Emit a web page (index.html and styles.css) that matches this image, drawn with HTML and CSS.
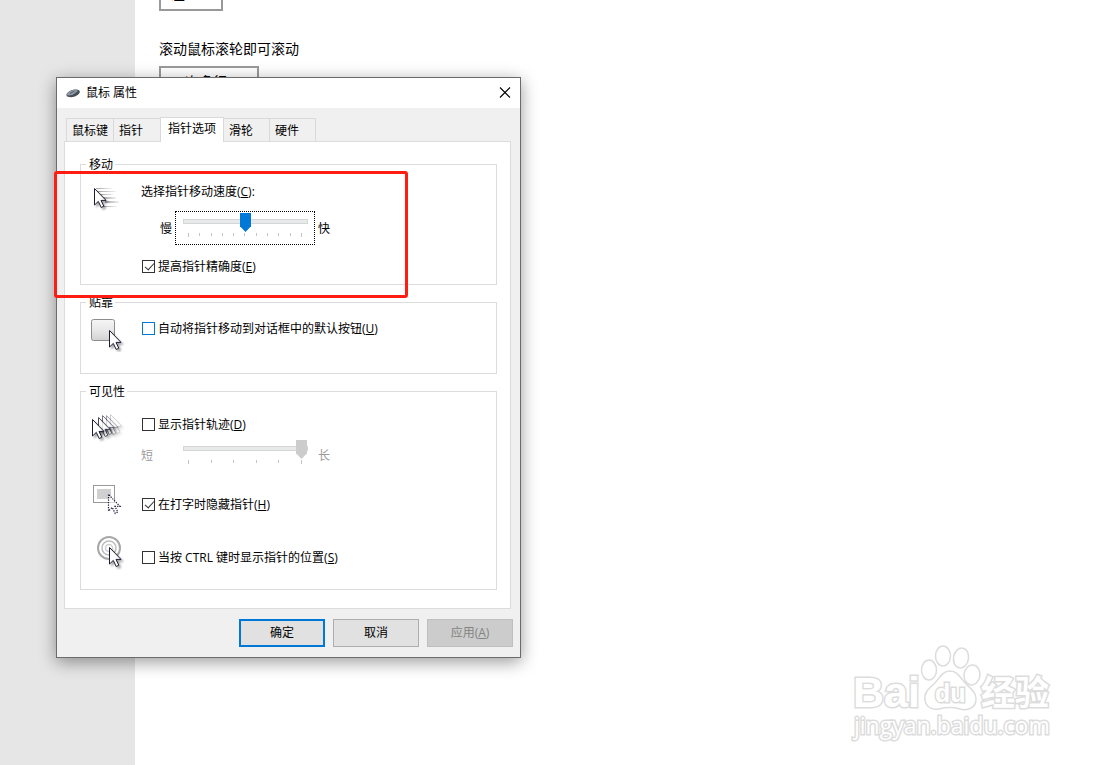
FILE: index.html
```
<!DOCTYPE html>
<html lang="zh-CN">
<head>
    <meta charset="UTF-8">
    <meta name="viewport" content="width=device-width, initial-scale=1.0">
    <title>鼠标 属性</title>
    <link rel="stylesheet" href="styles.css">
</head>
<body>
    <!-- shared cursor shapes -->
    <svg class="defs" width="0" height="0" aria-hidden="true">
        <defs>
            <path id="arrow" d="M0.5 0.5V17L4.3 13.4L7.2 19.5L9.8 18.2L7 12.4H12Z"/>
            <linearGradient id="fade" x1="0" x2="1">
                <stop offset="0" stop-color="#a4a4a4"/>
                <stop offset="1" stop-color="#f2f2f2"/>
            </linearGradient>
            <linearGradient id="key" x1="0" y1="0" x2="0" y2="1">
                <stop offset="0" stop-color="#f6f6f6"/>
                <stop offset="0.5" stop-color="#e8e8e8"/>
                <stop offset="1" stop-color="#d2d2d2"/>
            </linearGradient>
            <filter id="soft" x="-30%" y="-30%" width="170%" height="170%">
                <feDropShadow dx="2" dy="2" stdDeviation="1" flood-opacity="0.35"/>
            </filter>
        </defs>
    </svg>

    <div class="page">
        <aside class="sidebar"></aside>
        <main class="settings">
            <select class="picker picker-small" aria-label="主按钮">
                <option>左</option>
            </select>
            <label class="settings-label" for="scroll">滚动鼠标滚轮即可滚动</label>
            <select class="picker" id="scroll">
                <option>一次多行</option>
            </select>
        </main>
    </div>

    <div class="dialog" role="dialog" aria-labelledby="dialog-title">
        <header class="titlebar">
            <svg class="mouse" width="14" height="10" viewBox="0 0 14 10">
                <path d="M0.500 7.500C0 5 4 2 9 1.500C12 1.200 14 2 13.800 4C13.500 6.500 9 9.200 5 9.200C2.500 9.200 0.800 8.800 0.500 7.500Z" fill="#454c55"/>
                <path d="M0.800 6.500C2 3.500 6 1.800 10 1.800L12 3L6.500 7L2 7.500Z" fill="#8e99a6"/>
                <path d="M4 5.500L8.500 3" stroke="#525d6a" stroke-width="1"/>
            </svg>
            <span id="dialog-title">鼠标 属性</span>
            <button class="close" type="button" aria-label="关闭">
                <svg width="12" height="12" viewBox="0 0 12 12"><path d="M1 0.500L11 10.500M11 0.500L1 10.500" stroke="#000" stroke-width="1.100"/></svg>
            </button>
        </header>

        <div class="tabs" role="tablist">
            <button class="tab" type="button" role="tab">鼠标键</button>
            <button class="tab" type="button" role="tab">指针</button>
            <button class="tab active" type="button" role="tab" aria-selected="true">指针选项</button>
            <button class="tab" type="button" role="tab">滑轮</button>
            <button class="tab" type="button" role="tab">硬件</button>
        </div>

        <div class="panel">
            <fieldset class="group">
                <legend>移动</legend>
                <div class="option">
                    <svg class="icon" width="34" height="34" viewBox="0 0 34 34">
                        <g fill="url(#fade)">
                            <rect x="5" y="5" width="16" height="1"/>
                            <rect x="7" y="8" width="18" height="1"/>
                            <rect x="10" y="11" width="12" height="1"/>
                            <rect x="12" y="14" width="13" height="2"/>
                            <rect x="14" y="18" width="14" height="2"/>
                            <rect x="12" y="23" width="14" height="1"/>
                        </g>
                        <use href="#arrow" x="3" y="5" fill="#fff" stroke="#1c1c30" filter="url(#soft)"/>
                    </svg>
                    <div class="option-body">
                        <label class="line" for="speed">选择指针移动速度(<u>C</u>):</label>
                        <div class="slider-row">
                            <span class="slider-min">慢</span>
                            <div class="slider focused">
                                <input type="range" id="speed" min="0" max="10" value="5">
                                <div class="ticks"><i></i><i></i><i></i><i></i><i></i><i></i><i></i><i></i><i></i><i></i><i></i></div>
                            </div>
                            <span>快</span>
                        </div>
                        <div class="check">
                            <input type="checkbox" id="precision" checked>
                            <label for="precision">提高指针精确度(<u>E</u>)</label>
                        </div>
                    </div>
                </div>
            </fieldset>

            <fieldset class="group group-snap">
                <legend>贴靠</legend>
                <div class="option">
                    <svg class="icon" width="34" height="34" viewBox="0 0 34 34">
                        <rect x="0.500" y="1.500" width="23" height="21" rx="2" fill="url(#key)" stroke="#8c8c8c"/>
                        <use href="#arrow" x="18" y="12" fill="#fff" stroke="#1c1c30" filter="url(#soft)"/>
                    </svg>
                    <div class="option-body">
                        <div class="check">
                            <input type="checkbox" id="snap" class="hot">
                            <label for="snap">自动将指针移动到对话框中的默认按钮(<u>U</u>)</label>
                        </div>
                    </div>
                </div>
            </fieldset>

            <fieldset class="group group-visibility">
                <legend>可见性</legend>
                <div class="option">
                    <svg class="icon" width="34" height="34" viewBox="0 0 34 34">
                        <g fill="#fff" stroke="#1c1c30">
                            <g opacity="0.2"><use href="#arrow" x="19" y="0" filter="url(#soft)"/></g>
                            <g opacity="0.4"><use href="#arrow" x="15" y="1" filter="url(#soft)"/></g>
                            <g opacity="0.6"><use href="#arrow" x="11" y="1" filter="url(#soft)"/></g>
                            <g opacity="0.8"><use href="#arrow" x="7" y="3" filter="url(#soft)"/></g>
                            <use href="#arrow" x="1" y="5" filter="url(#soft)"/>
                        </g>
                    </svg>
                    <div class="option-body">
                        <div class="check">
                            <input type="checkbox" id="trail">
                            <label for="trail">显示指针轨迹(<u>D</u>)</label>
                        </div>
                        <div class="slider-row disabled">
                            <label class="slider-label" for="length">短</label>
                            <div class="slider">
                                <input type="range" id="length" min="0" max="5" value="5" disabled>
                                <div class="ticks"><i></i><i></i><i></i><i></i><i></i><i></i></div>
                            </div>
                            <span>长</span>
                        </div>
                    </div>
                </div>
                <div class="option option-low">
                    <svg class="icon" width="34" height="34" viewBox="0 0 34 34">
                        <rect x="2.500" y="2.500" width="21" height="17" fill="#fff" stroke="#999"/>
                        <rect x="6" y="6" width="14" height="10" fill="#d0d0d0"/>
                        <use href="#arrow" x="17" y="11" fill="#fff" fill-opacity="0.600" stroke="#101030" stroke-width="1.200" stroke-dasharray="1.200 1.300"/>
                    </svg>
                    <div class="option-body">
                        <div class="check">
                            <input type="checkbox" id="typing" checked>
                            <label for="typing">在打字时隐藏指针(<u>H</u>)</label>
                        </div>
                    </div>
                </div>
                <div class="option option-low">
                    <svg class="icon" width="34" height="34" viewBox="0 0 34 34">
                        <g fill="none">
                            <circle cx="18" cy="12" r="11" stroke="#a8a8a8" stroke-width="2"/>
                            <circle cx="18" cy="12" r="7" stroke="#bdbdbd" stroke-width="1.500"/>
                            <circle cx="18" cy="12" r="3.500" stroke="#cfcfcf" stroke-width="1.500"/>
                        </g>
                        <use href="#arrow" x="18" y="11" fill="#fff" stroke="#1c1c30" filter="url(#soft)"/>
                    </svg>
                    <div class="option-body">
                        <div class="check">
                            <input type="checkbox" id="ctrl">
                            <label for="ctrl">当按 CTRL 键时显示指针的位置(<u>S</u>)</label>
                        </div>
                    </div>
                </div>
            </fieldset>
        </div>

        <footer class="actions">
            <button class="btn primary" type="button">确定</button>
            <button class="btn" type="button">取消</button>
            <button class="btn" type="button" disabled>应用(<u>A</u>)</button>
        </footer>
    </div>

    <div class="highlight"></div>

    <svg class="watermark" width="214" height="106" viewBox="0 0 214 106">
        <g fill="#fff" stroke="#dcdcdc" stroke-width="1.500">
            <ellipse cx="84" cy="27" rx="7.500" ry="10"/>
            <ellipse cx="98" cy="13" rx="7.500" ry="10"/>
            <ellipse cx="116" cy="15" rx="7.500" ry="10" transform="rotate(10 116 15)"/>
            <ellipse cx="127" cy="32" rx="8" ry="10" transform="rotate(8 127 32)"/>
            <path d="M105 28C97 28 94 36 89 41C83 46 79 50 80 57C81 65 88 67 94 66C102 64 108 64 115 66C123 68 131 65 131 56C131 49 126 46 121 41C116 36 113 28 105 28Z"/>
            <g class="outlined">
                <text x="8" y="64" font-size="43">Bai</text>
                <text x="90" y="59" font-size="25">du</text>
                <text x="136" y="62" font-size="34">经验</text>
                <text class="url" x="9" y="91" font-size="23">jingyan.baidu.com</text>
            </g>
        </g>
    </svg>
</body>
</html>
```

FILE: styles.css
```
* {
    box-sizing: border-box;
}
body {
    margin: 0;
    background: #fff;
    color: #000;
    font-family: "Open Sans", "Noto Sans CJK SC", sans-serif;
    font-size: 12px;
    line-height: 16px;
}
button, select, input {
    font: inherit;
    color: inherit;
    margin: 0;
}
.defs {
    position: absolute;
}

/* settings page behind the dialog */
.page {
    display: flex;
    height: 100vh;
    overflow: hidden;
}
.sidebar {
    flex: 0 0 135px;
    background: #e6e6e6;
}
.settings {
    flex: 1;
    display: flex;
    flex-direction: column;
    align-items: flex-start;
    padding-left: 24px;
    margin-top: -21px;
    font-size: 14px;
}
.settings-label {
    margin: 30px 0 9px;
}
.picker {
    appearance: none;
    width: 100px;
    height: 32px;
    padding: 0 10px;
    border: 2px solid #999;
    border-radius: 0;
    background: #fff;
}
.picker-small {
    width: 64px;
}

/* dialog */
.dialog {
    position: absolute;
    left: 56px;
    top: 77px;
    width: 465px;
    border: 1px solid #6b6b6b;
    background: #f0f0f0;
    box-shadow: 0 4px 16px rgba(0, 0, 0, 0.4);
}
.titlebar {
    display: flex;
    align-items: center;
    height: 30px;
    padding: 0 9px;
    background: #fff;
}
.mouse {
    margin-right: 6px;
}
.close {
    display: flex;
    margin-left: auto;
    padding: 0;
    border: 0;
    background: none;
}

.tabs {
    display: flex;
    align-items: flex-end;
    padding: 9px 9px 0;
}
.tab {
    min-width: 48px;
    height: 23px;
    margin-right: -1px;
    padding: 2px 5px 0;
    border: 1px solid #d9d9d9;
    border-bottom: 0;
    background: #f0f0f0;
    text-align: left;
}
.tab.active {
    position: relative;
    height: 25px;
    margin-bottom: -1px;
    padding: 0 7px 2px;
    background: #fff;
}
.tab.active ~ .tab {
    min-width: 47px;
}
.panel {
    display: flex;
    flex-direction: column;
    gap: 10px;
    margin: 0 9px 0 7px;
    padding: 15px 13px 18px 15px;
    border: 1px solid #dcdcdc;
    background: #fff;
}

.group {
    min-width: 0;
    margin: 0;
    padding: 11px 10px 10px;
    border: 1px solid #dcdcdc;
}
.group legend {
    height: 15px;
    margin-left: -5px;
    padding: 0 2px 0 3px;
}
.group-snap {
    padding: 8px 10px 21px;
}
.group-visibility {
    padding: 15px 10px 19px;
}
.option {
    display: flex;
    gap: 16px;
}
.icon {
    flex: none;
}
.group-snap .option-body,
.group-visibility .option-body {
    padding-top: 2px;
}
.option-low {
    margin-top: 11px;
}
.option-low + .option-low {
    margin-top: 19px;
}
.group-visibility .option-low .option-body {
    padding-top: 13px;
}
.line {
    display: block;
    padding-top: 1px;
    margin-bottom: 11px;
}

.check {
    display: flex;
    align-items: center;
    gap: 3px;
    height: 16px;
    padding-left: 1px;
}
.check label,
.slider-row > span,
.slider-row > label {
    padding-top: 2px;
}
.check input {
    appearance: none;
    position: relative;
    width: 13px;
    height: 13px;
    border: 1px solid #333;
    background: #fff;
}
.check input.hot {
    border-color: #0078d7;
}
.check input:checked::before {
    content: "";
    position: absolute;
    left: 4px;
    top: 0;
    width: 4px;
    height: 8px;
    border: solid #333;
    border-width: 0 1px 1px 0;
    transform: rotate(42deg);
}

.slider-row {
    display: flex;
    align-items: center;
    gap: 3px;
    margin-bottom: 13px;
}
.slider-min,
.slider-label {
    width: 31px;
}
.slider-min {
    text-align: right;
}
.slider {
    width: 140px;
    height: 34px;
    padding: 1px 7px;
    border: 1px solid transparent;
}
.slider.focused {
    border: 1px dotted #000;
}
.slider input {
    appearance: none;
    display: block;
    width: 125px;
    height: 17px;
    margin-bottom: 2px;
    background: none;
}
.slider input::-webkit-slider-runnable-track {
    height: 5px;
    border: 1px solid #d6d6d6;
    background: #e7eaea;
}
.slider input::-webkit-slider-thumb {
    appearance: none;
    width: 11px;
    height: 19px;
    margin-top: -7px;
    background: #0078d7;
    clip-path: polygon(0 0, 100% 0, 100% 70%, 50% 100%, 0 70%);
}
.slider input:disabled::-webkit-slider-thumb {
    background: #ccc;
}
.ticks {
    display: flex;
    justify-content: space-between;
    padding: 1px 5px 0;
}
.ticks i {
    width: 1px;
    height: 3px;
    background: #c4c4c4;
}
.ticks i:first-child,
.ticks i:last-child {
    height: 4px;
}
.disabled {
    margin: 6px 0 0;
    color: #9a9a9a;
}

.actions {
    display: flex;
    justify-content: flex-end;
    gap: 8px;
    padding: 10px 7px;
}
.btn {
    width: 86px;
    height: 28px;
    padding: 0;
    border: 1px solid #adadad;
    background: #e1e1e1;
}
.btn.primary {
    border: 2px solid #0078d7;
}
.btn:disabled {
    border-color: #bfbfbf;
    background: #ccc;
    color: #838383;
}

/* red callout over the motion group */
.highlight {
    position: absolute;
    left: 54px;
    top: 171px;
    width: 354px;
    height: 127px;
    border: 3px solid #ff1d12;
    border-radius: 3px;
    pointer-events: none;
}

.watermark {
    position: absolute;
    right: 54px;
    bottom: 16px;
}
.outlined {
    font-family: "Liberation Sans", "Noto Sans CJK SC", sans-serif;
    font-weight: bold;
    paint-order: stroke;
    stroke-width: 3px;
}
.outlined .url {
    font-family: "Open Sans", sans-serif;
    font-weight: normal;
}
```
